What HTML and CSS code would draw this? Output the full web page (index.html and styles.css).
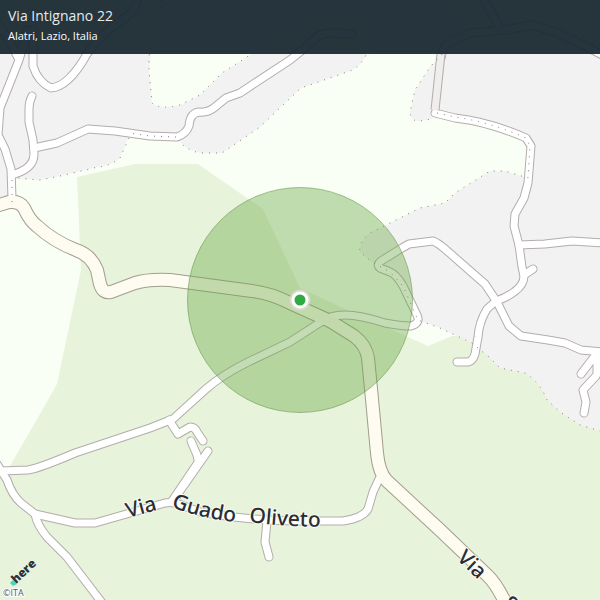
FILE: index.html
```html
<!DOCTYPE html>
<html lang="it">
<head>
<meta charset="utf-8">
<title>Via Intignano 22</title>
<link rel="stylesheet" href="styles.css">
</head>
<body>
<main class="map">
  <svg class="map-canvas" viewBox="0 0 600 600">
    <defs>
      <g id="minor-roads">
        <path d="M-4 20L12 46L19 60L0 108L-2 135L5 149L11 169L12 198M19 60L28 30"/>
        <path d="M33 30V66Q38 82 51 88C63 87 76 74 87 54Q105 30 125 18Q135 11 137 0"/>
        <path d="M32 96Q29 102 29 109V122L33 140L34 154Q34 166 20 172L12 175"/>
        <path d="M34 148L57 143L88 129L115 131L150 136L177 137Q186 134 189 126Q190 113 199 112Q208 113 215 107L226 98L240 93L255 83L290 60L305 48L318 36Q324 33 333 33L352 34"/>
        <path d="M481 -5L500 27M604 56L575 41L555 32L532 25L505 30L470 33L448 43Q443 47 441 58"/>
        <path d="M435 113L455 118Q490 122 526 138L531 146L528 183L524 198L515 214L514 226L519 245L522 267L524 276Q524 285 514 292Q506 298 496 301L487 309Q479 322 478 337L475 354Q473 361 468 362L457 362"/>
        <path d="M519 245L545 244L572 241L604 243M524 275L533 269"/>
        <path d="M320 322Q330 315 345 315Q360 315 385 323Q400 326 411 326Q421 323 417 315L403 286Q396 274 390 272L380 268Q376 265 381 261L402 248L409 244L433 241Q438 243 445 249L485 284L497 302L509 326L521 336L548 340L565 343L581 350L604 352"/>
        <path d="M598 352L594 357L581 374M604 362L596 376L583 390L586 402L584 413M597 352V372"/>
        <path d="M327 318L290 342L248 362Q222 375 206 389L173 419L150 428L75 453Q40 468 28 470L-3 471"/>
        <path d="M-3 464L7 480Q12 495 21 503L35 514L75 523H95L165 503L173 502L200 512Q250 521 300 521H343Q363 518 368 509L373 492L379 479"/>
        <path d="M35 514Q37 525 47 537L67 557L103 604"/>
        <path d="M169 420L178 434L190 427Q195 427 197 432L203 441M191 441L197 455L198 460M208 451L180 491L173 503M199 461L172 501"/>
        <path d="M267 521L265 542L269 557"/>
      </g>
      <path id="main-road" d="M-4 206L9 202Q20 201 24 208Q30 221 37 226Q53 241 76 250Q91 255 97 270L100 284Q103 294 111 292L135 283Q148 279 170 280L252 291Q270 293 290 303L330 321L354 336Q366 345 368 358L372 399L377 453Q379 473 387 481L440 530L487 575Q496 583 506 604"/>
      <path id="guado-via" d="M128 518L164 508"/>
      <path id="guado-mid" d="M171 507Q205 520 245 523"/>
      <path id="guado-end" d="M249 522Q285 527 340 527"/>
    </defs>

    <path class="wood" d="M77 177L135 164H198L247 198L263 209L300 288L345 309L428 346L452 336H600V600H0V470L10 466L48 400L57 384L81 270Z"/>
    <path class="town" d="M0 0H163L153 40L149 70L152 103Q160 110 180 105L200 95L222 73L250 55L290 28L320 15L350 11Q368 12 373 25Q373 43 366 55Q360 67 350 71L301 88L283 105L260 127L222 153H200Q186 150 178 140L129 136L120 158Q110 166 98 167L60 176L40 180L14 178V200L0 202Z"/>
    <path class="town" d="M440 0L452 14L467 28L442 54L430 67L415 90L410 112Q411 122 420 121L432 119L435 113L490 122L529 140L527 178L505 171H490L455 193L445 203L420 208L370 233Q358 243 360 252L372 262L390 272L403 286L418 320L440 328L472 343L489 357L500 368L525 373Q540 382 547 400L560 412L580 425L600 431V0Z"/>

    <use href="#minor-roads" class="road minor-edge"/>
    <use href="#main-road" class="road main-edge"/>
    <use href="#minor-roads" class="road minor-fill"/>
    <path class="road tunnel-edge" d="M441 54L435 110"/>
    <path class="road tunnel-fill" d="M441 54L435 110"/>
    <use href="#main-road" class="road main-fill"/>

    <g class="boundary">
      <path d="M163 0L153 40L149 56L149 70L152 103Q160 110 180 105L200 95L222 73L250 55L290 28L320 15L350 11Q368 12 373 25Q373 43 366 55Q360 67 350 71L301 88L283 105L260 127L222 153H200Q186 150 178 140"/>
      <path d="M176 137L150 136L129 133M129 138L120 158Q110 166 98 167L60 176L40 180L16 178M12 180V204"/>
      <path d="M440 0L467 28M442 54L430 67L415 90L410 112Q411 122 420 121L432 119M437 113L455 117Q490 122 526 138L530 146L528 178L505 171H490L455 193L445 203L420 208L370 233Q358 243 360 252L372 262L390 272L403 286L418 320L440 328L472 343L489 357L500 368L525 373Q540 382 547 400L560 412L580 425L600 431"/>
    </g>

    <g class="road-name">
      <text><textPath href="#guado-via">Via</textPath></text>
      <text><textPath href="#guado-mid">Guado</textPath></text>
      <text><textPath href="#guado-end">Oliveto</textPath></text>
      <text transform="translate(456 559) rotate(43)">Via</text>
      <text transform="translate(501 603) rotate(52)">S</text>
    </g>

    <circle class="area" cx="300" cy="300" r="112.5"/>
    <circle class="pin-halo" cx="300" cy="300" r="10.5"/>
    <circle class="pin-ring" cx="300" cy="300" r="8.5"/>
    <circle class="pin-dot" cx="300" cy="300" r="5.5"/>

    <path class="brand-mark" d="M10 583L13 580L17 584L13 586Z"/>
    <text class="brand" transform="translate(16 584) rotate(-43)">here</text>
    <text class="copyright" x="3" y="596">©ITA</text>
  </svg>
  <header class="address">
    <h1 class="street">Via Intignano 22</h1>
    <p class="place">Alatri, Lazio, Italia</p>
  </header>
</main>
</body>
</html>
```
FILE: styles.css
```css
body {
  margin: 0;
  font-family: "Open Sans", "Noto Sans", sans-serif;
  background: #f9fff5;
}

.map {
  position: relative;
}

.map-canvas {
  display: block;
  width: 100%;
  height: auto;
}

.address {
  position: absolute;
  top: 0;
  left: 0;
  right: 0;
  padding: 6px 8px 10px;
  background: rgba(22, 38, 46, 0.93);
  color: #fff;
}

.street {
  margin: 0;
  font-size: 14px;
  line-height: 20px;
  font-weight: 400;
  color: #e4eaee;
}

.place {
  margin: 2px 0 0;
  font-size: 11px;
  line-height: 16px;
}

.wood { fill: #e7f3da; }
.town { fill: #f3f2f2; }

.road {
  fill: none;
  stroke-linecap: round;
  stroke-linejoin: round;
}

.minor-edge { stroke: #b3adab; stroke-width: 9px; }
.minor-fill { stroke: #fff; stroke-width: 7px; }
.main-edge { stroke: #a39d8f; stroke-width: 14px; }
.main-fill { stroke: #fefbf1; stroke-width: 12px; }
.tunnel-edge { stroke: #b3adab; stroke-width: 9px; stroke-linecap: butt; }
.tunnel-fill { stroke: #f0eeed; stroke-width: 7px; stroke-linecap: butt; }

.boundary {
  fill: none;
  stroke: #857b7e;
  stroke-width: 1px;
  stroke-dasharray: 1 6;
}

.road-name {
  font-family: "Noto Sans", sans-serif;
  font-size: 21px;
  font-weight: 500;
  fill: #2a2d36;
  stroke: #fbfdf3;
  stroke-width: 2px;
  stroke-linejoin: round;
  paint-order: stroke;
}

.area {
  fill: rgba(106, 168, 68, 0.4);
  stroke: rgba(90, 140, 60, 0.5);
  stroke-width: 1px;
}

.pin-halo { fill: rgba(225, 218, 215, 0.8); }
.pin-ring { fill: #fff; }
.pin-dot { fill: #2fab43; }

.brand {
  font-size: 12px;
  font-weight: 800;
  fill: #2b3238;
}

.brand-mark { fill: #4fd3b8; }

.copyright {
  font-size: 9px;
  fill: #55585c;
  stroke: #fff;
  stroke-width: 2px;
  paint-order: stroke;
}
```
